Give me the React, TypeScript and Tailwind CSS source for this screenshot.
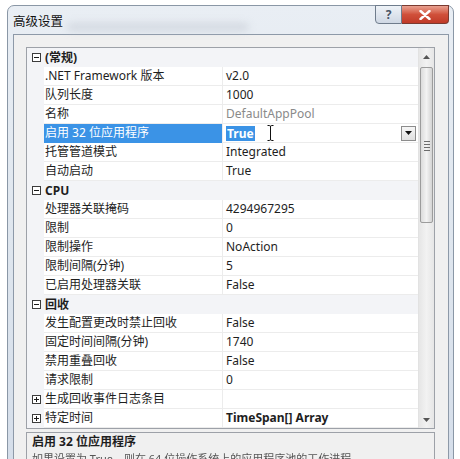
import React from "react";

type Row =
  | { kind: "cat"; label: string; open: boolean }
  | { kind: "prop"; label: string; value: string; gray?: boolean; selected?: boolean; bold?: boolean; expander?: boolean };

const rows: Row[] = [
  { kind: "cat", label: "(常规)", open: true },
  { kind: "prop", label: ".NET Framework 版本", value: "v2.0" },
  { kind: "prop", label: "队列长度", value: "1000" },
  { kind: "prop", label: "名称", value: "DefaultAppPool", gray: true },
  { kind: "prop", label: "启用 32 位应用程序", value: "True", selected: true },
  { kind: "prop", label: "托管管道模式", value: "Integrated" },
  { kind: "prop", label: "自动启动", value: "True" },
  { kind: "cat", label: "CPU", open: true },
  { kind: "prop", label: "处理器关联掩码", value: "4294967295" },
  { kind: "prop", label: "限制", value: "0" },
  { kind: "prop", label: "限制操作", value: "NoAction" },
  { kind: "prop", label: "限制间隔(分钟)", value: "5" },
  { kind: "prop", label: "已启用处理器关联", value: "False" },
  { kind: "cat", label: "回收", open: true },
  { kind: "prop", label: "发生配置更改时禁止回收", value: "False" },
  { kind: "prop", label: "固定时间间隔(分钟)", value: "1740" },
  { kind: "prop", label: "禁用重叠回收", value: "False" },
  { kind: "prop", label: "请求限制", value: "0" },
  { kind: "prop", label: "生成回收事件日志条目", value: "", expander: true },
  { kind: "prop", label: "特定时间", value: "TimeSpan[] Array", bold: true, expander: true },
];

function Box({ open }: { open: boolean }) {
  return (
    <svg width="9" height="9" viewBox="0 0 9 9" className="block">
      <rect x="0.5" y="0.5" width="8" height="8" fill="#fff" stroke="#3c3c3c" />
      <line x1="2" y1="4.5" x2="7" y2="4.5" stroke="#1a1a1a" />
      {!open && <line x1="4.5" y1="2" x2="4.5" y2="7" stroke="#1a1a1a" />}
    </svg>
  );
}

export default function App() {
  return (
    <div className="w-[460px] h-[459px] bg-white overflow-hidden font-['Noto_Sans','Noto_Sans_CJK_SC',sans-serif] text-[12px] text-[#1e1e1e]">
      <div className="ml-[7px] mt-[5px] w-[447px] h-[460px] rounded-t-[7px] border border-[#8a97a6] bg-gradient-to-b from-[#e9eef4] via-[#dfe6ee] to-[#d5deea] flex flex-col">
        {/* title bar */}
        <div className="h-[28px] shrink-0 flex items-start justify-between relative">
          <div className="pl-[5px] pt-[6px] font-['Noto_Sans_CJK_SC',sans-serif] text-[12.5px] text-[#111]">高级设置</div>
          <div className="absolute left-[60px] top-[18px] w-[180px] h-[6px] bg-[#b8bec8] blur-[4px] opacity-60" />
          <div className="flex mr-[4px] -mt-px">
            <div className="w-[27px] h-[19px] border border-[#6f7c8c] rounded-bl-[4px] bg-gradient-to-b from-[#eef2f7] to-[#cfd8e4] flex items-center justify-center text-[12px] font-bold text-[#4a5566]">?</div>
            <div className="w-[47px] h-[19px] border border-l-0 border-[#7a3a30] rounded-br-[4px] bg-gradient-to-b from-[#e8a090] via-[#d0503a] to-[#c03a28] flex items-center justify-center">
              <svg width="12" height="10" viewBox="0 0 12 10">
                <path d="M1.5 1 L10.5 9 M10.5 1 L1.5 9" stroke="#fff" strokeWidth="2.4" strokeLinecap="round" />
              </svg>
            </div>
          </div>
        </div>
        {/* client area */}
        <div className="ml-[5px] w-[436px] flex-1 min-h-0 border border-[#8d99a8] bg-[#f0f0f0] pl-[12px] pt-[12px]">
          {/* property grid */}
          <div className="w-[409px] h-[382px] border border-[#9da1a8] bg-white flex">
            <div className="w-[391px] flex flex-col">
              {rows.map((r, i) => {
                if (r.kind === "cat") {
                  return (
                    <div key={i} className="h-[19px] shrink-0 flex items-center bg-[#f3f4f7]">
                      <div className="w-[17px] flex justify-center pl-px"><Box open={r.open} /></div>
                      <div className="pl-[1px] font-bold">{r.label}</div>
                    </div>
                  );
                }
                return (
                  <div key={i} className="h-[19px] shrink-0 flex">
                    <div className="w-[17px] bg-[#f3f4f7] flex items-center justify-center pl-px">
                      {r.expander && <Box open={false} />}
                    </div>
                    <div
                      className={
                        "w-[178px] pl-[1px] flex items-center border-b " +
                        (r.selected ? "bg-[#3b93e6] text-white border-[#3b93e6]" : "border-[#ececec]")
                      }
                    >
                      {r.label}
                    </div>
                    <div className="w-px bg-[#ececec]" />
                    <div className="flex-1 pl-[3px] flex items-center border-b border-[#ececec] relative">
                      {r.selected ? (
                        <>
                          <span className="bg-[#3b93e6] text-white font-bold px-px leading-[15px]">{r.value}</span>
                          <svg width="7" height="16" viewBox="0 0 7 16" className="ml-[12px]">
                            <path d="M0.5 0.5 H2.5 Q3.5 0.5 3.5 2 V14 Q3.5 15.5 2.5 15.5 H0.5 M6.5 0.5 H4.5 Q3.5 0.5 3.5 2 M3.5 14 Q3.5 15.5 4.5 15.5 H6.5" stroke="#111" strokeWidth="1" fill="none" />
                          </svg>
                          <div className="ml-auto mr-[2px] w-[15px] h-[15px] border border-[#8c8c8c] bg-gradient-to-b from-[#f6f6f6] to-[#e0e0e0] flex items-center justify-center">
                            <svg width="7" height="4" viewBox="0 0 7 4"><path d="M0 0 L7 0 L3.5 4 Z" fill="#111" /></svg>
                          </div>
                        </>
                      ) : (
                        <span className={(r.gray ? "text-[#8a8a8a] " : "") + (r.bold ? "font-bold" : "")}>{r.value}</span>
                      )}
                    </div>
                  </div>
                );
              })}
            </div>
            {/* scrollbar */}
            <div className="w-[16px] bg-gradient-to-r from-[#e6e6e6] via-[#f2f2f2] to-[#e6e6e6] border-l border-[#e2e2e2] flex flex-col items-center">
              <div className="h-[17px] flex items-center justify-center">
                <svg width="7" height="4" viewBox="0 0 7 4"><path d="M0 4 L7 4 L3.5 0 Z" fill="#555" /></svg>
              </div>
              <div className="mt-[2px] w-[13px] h-[156px] border border-[#9c9c9c] rounded-[2px] bg-gradient-to-r from-[#dcdcdc] via-[#f3f3f3] to-[#d4d4d4] flex items-center justify-center">
                <div className="flex flex-col gap-[2px] mt-[2px]">
                  <div className="w-[6px] h-px bg-[#6c6c6c]" />
                  <div className="w-[6px] h-px bg-[#6c6c6c]" />
                  <div className="w-[6px] h-px bg-[#6c6c6c]" />
                  <div className="w-[6px] h-px bg-[#6c6c6c]" />
                </div>
              </div>
              <div className="flex-1" />
              <div className="h-[17px] flex items-center justify-center">
                <svg width="7" height="4" viewBox="0 0 7 4"><path d="M0 0 L7 0 L3.5 4 Z" fill="#555" /></svg>
              </div>
            </div>
          </div>
          {/* description */}
          <div className="mt-[3px] w-[409px] h-[60px] border border-[#9da1a8] bg-[#f0f0f0] pl-[5px] pt-0">
            <div className="font-bold leading-[18px]">启用 32 位应用程序</div>
            <div className="leading-[16px] text-[#555] blur-[0.6px] text-[11px]">如果设置为 True，则在 64 位操作系统上的应用程序池的工作进程</div>
          </div>
        </div>
      </div>
    </div>
  );
}
